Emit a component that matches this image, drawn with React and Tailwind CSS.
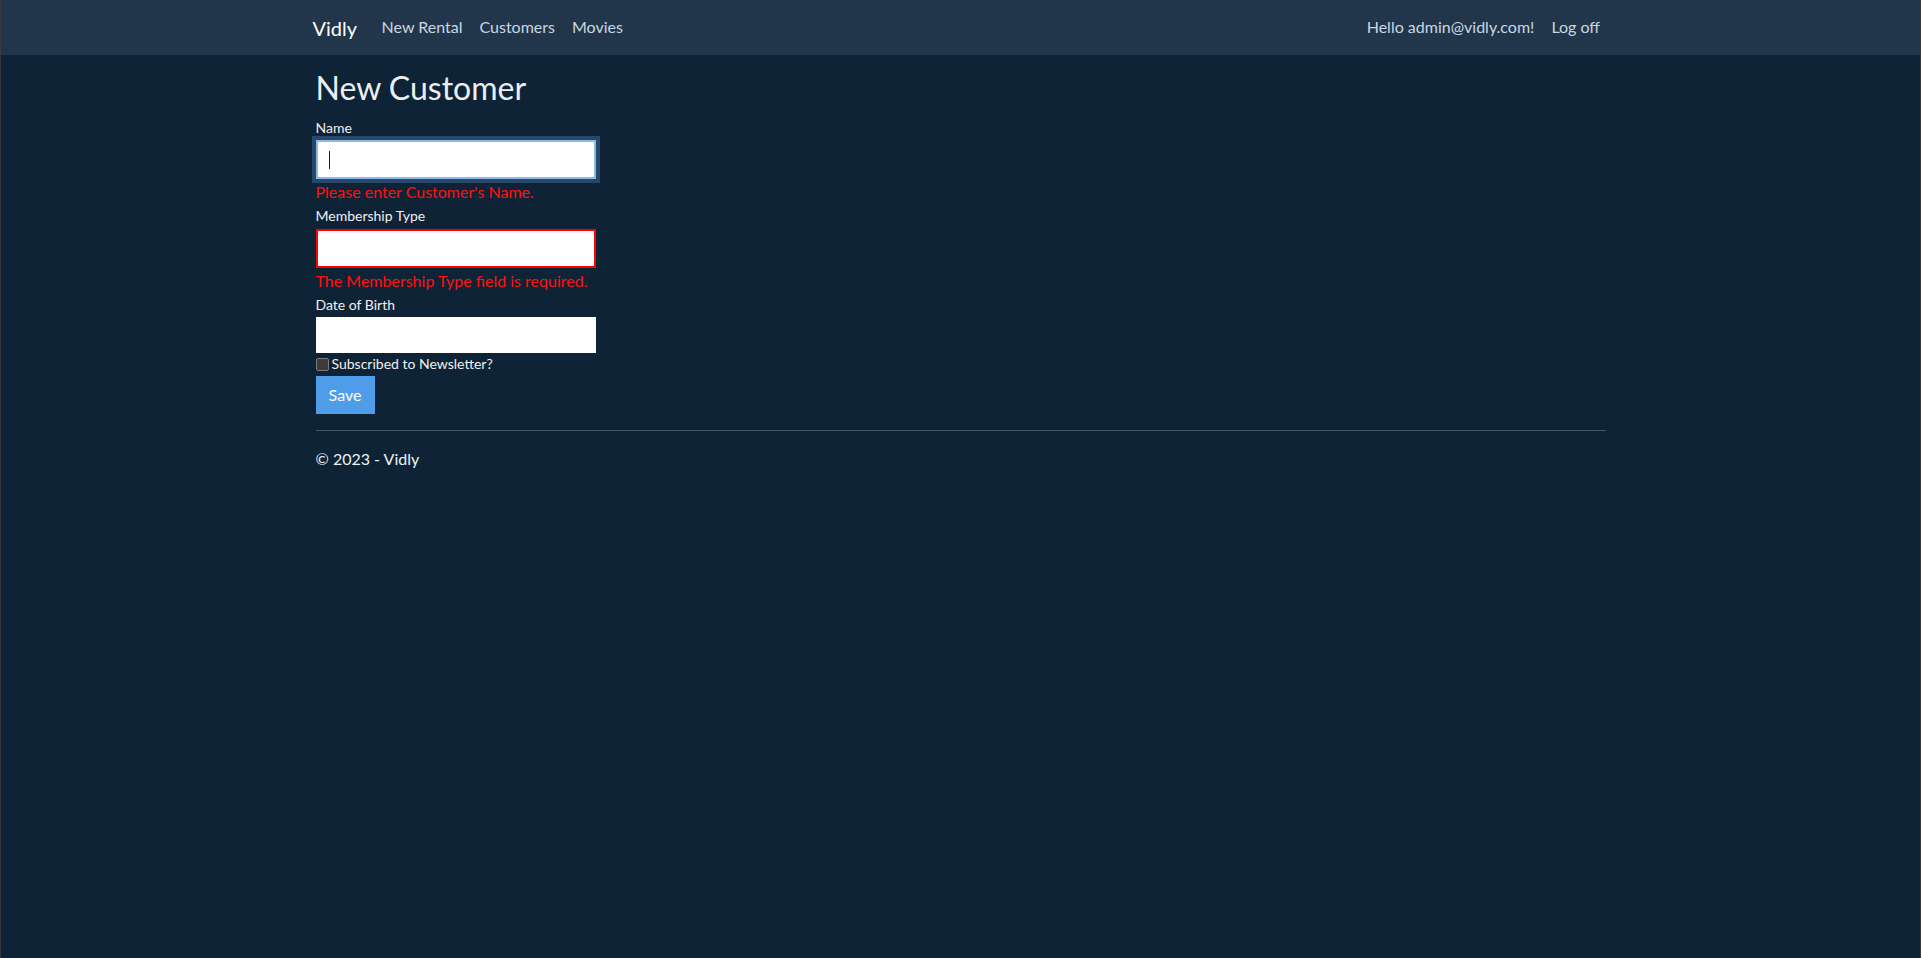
import React from 'react';

const navLinks = ['New Rental', 'Customers', 'Movies'];

const App = () => {
  return (
    <div className="min-h-[958px] bg-[#0f2337] border-x border-[#3a3a3a] font-['Lato','Liberation_Sans',sans-serif] text-[#eef1f4]">
      {/* Navbar */}
      <nav className="h-[55px] bg-[#22364b]">
        <div className="mx-auto w-[1296px] h-full flex items-center justify-between pb-[1px]">
          <div className="flex items-center">
            <a className="text-[20px] leading-none text-white mr-[16px] pt-[1px]">Vidly</a>
            <ul className="flex items-center">
              {navLinks.map((l) => (
                <li key={l} className="px-[8.5px] text-[16px] text-[#c9d6e2]">{l}</li>
              ))}
            </ul>
          </div>
          <ul className="flex items-center">
            <li className="px-[8.5px] text-[16px] text-[#c9d6e2]">Hello admin@vidly.com!</li>
            <li className="px-[8.5px] text-[16px] text-[#c9d6e2]">Log off</li>
          </ul>
        </div>
      </nav>

      {/* Body */}
      <div className="mx-auto w-[1290px] pt-[14px]">
        <h2 className="text-[32px] leading-[1.2] text-[#eceff2]">New Customer</h2>

        <form className="mt-[13px]">
          {/* Name */}
          <label className="block text-[14px] leading-[1.2] text-[#f0f0f0]">Name</label>
          <div className="mt-[3px] w-[280px] h-[39px] bg-white border-2 border-[#8cb9ea] outline-[4px] outline-solid outline-[#27486b] flex items-center pl-[11px]">
            <span className="w-px h-[18px] bg-[#222]" />
          </div>
          <p className="mt-[3px] text-[16px] leading-[1.2] text-[#ff1111]">Please enter Customer's Name.</p>

          {/* Membership Type */}
          <label className="block mt-[7px] text-[14px] leading-[1.2] text-[#f0f0f0]">Membership Type</label>
          <div className="mt-[4px] w-[280px] h-[39px] bg-white border-2 border-[#ff0000]" />
          <p className="mt-[3px] text-[16px] leading-[1.2] text-[#ff1111]">The Membership Type field is required.</p>

          {/* Date of Birth */}
          <label className="block mt-[7px] text-[14px] leading-[1.2] text-[#f0f0f0]">Date of Birth</label>
          <div className="mt-[3px] w-[280px] h-[36px] bg-white" />

          {/* Newsletter */}
          <div className="mt-[3px] flex items-center">
            <span className="w-[13px] h-[13px] rounded-[2px] bg-[#3b3b3b] border border-[#7a7a7a]" />
            <span className="ml-[3px] text-[14px] leading-[1.2] text-[#f0f0f0]">Subscribed to Newsletter?</span>
          </div>

          <button type="button" className="mt-[3px] w-[59px] h-[38px] bg-[#4f9de8] text-white text-[16px] leading-none">
            Save
          </button>
        </form>

        <hr className="mt-[16px] border-t border-[#4b5766]" />

        <footer className="mt-[18px]">
          <p className="text-[16px] leading-[1.2] text-[#eef1f4]">© 2023 - Vidly</p>
        </footer>
      </div>
    </div>
  );
};

export default App;
